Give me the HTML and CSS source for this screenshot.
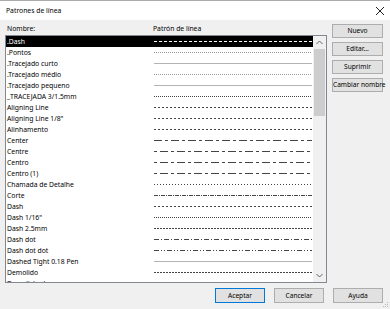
FILE: index.html
```html
<!DOCTYPE html>
<html lang="es">
<head>
  <meta charset="UTF-8">
  <title>Patrones de línea</title>
  <link rel="stylesheet" href="styles.css">
</head>
<body>
  <div class="dialog">
    <!-- Barra de título -->
    <div class="titlebar">
      <span class="title">Patrones de línea</span>
      <svg class="close" width="10" height="10" viewBox="0 0 10 10"><path d="M1 1 L9 9 M9 1 L1 9" stroke="#222" stroke-width="1"/></svg>
    </div>

    <div class="content">
      <div class="main">
        <div class="list-area">
          <div class="heads">
            <span class="col-name">Nombre:</span>
            <span>Patrón de línea</span>
          </div>
          <div class="listbox">
            <div class="rows">
              <div class="row sel"><span class="name">.Dash</span><span class="pat p-dash"></span></div>
              <div class="row"><span class="name">.Pontos</span><span class="pat p-fine"></span></div>
              <div class="row"><span class="name">.Tracejado curto</span><span class="pat p-solid"></span></div>
              <div class="row"><span class="name">.Tracejado médio</span><span class="pat p-fine"></span></div>
              <div class="row"><span class="name">.Tracejado pequeno</span><span class="pat p-solid"></span></div>
              <div class="row"><span class="name">_TRACEJADA 3/1.5mm</span><span class="pat p-fine dark"></span></div>
              <div class="row"><span class="name">Aligning Line</span><span class="pat p-dash"></span></div>
              <div class="row"><span class="name">Aligning Line 1/8"</span><span class="pat p-dash"></span></div>
              <div class="row"><span class="name">Alinhamento</span><span class="pat p-dash"></span></div>
              <div class="row"><span class="name">Center</span><span class="pat p-center"></span></div>
              <div class="row"><span class="name">Centre</span><span class="pat p-centre"></span></div>
              <div class="row"><span class="name">Centro</span><span class="pat p-centre"></span></div>
              <div class="row"><span class="name">Centro (1)</span><span class="pat p-centre"></span></div>
              <div class="row"><span class="name">Chamada de Detalhe</span><span class="pat p-dot"></span></div>
              <div class="row"><span class="name">Corte</span><span class="pat p-corte"></span></div>
              <div class="row"><span class="name">Dash</span><span class="pat p-dash"></span></div>
              <div class="row"><span class="name">Dash 1/16"</span><span class="pat p-fine dark"></span></div>
              <div class="row"><span class="name">Dash 2.5mm</span><span class="pat p-small"></span></div>
              <div class="row"><span class="name">Dash dot</span><span class="pat p-dashdot"></span></div>
              <div class="row"><span class="name">Dash dot dot</span><span class="pat p-dashdotdot"></span></div>
              <div class="row"><span class="name">Dashed Tight 0.18 Pen</span><span class="pat p-solid"></span></div>
              <div class="row"><span class="name">Demolido</span><span class="pat p-small"></span></div>
              <div class="row"><span class="name">Demolished</span><span class="pat p-dash"></span></div>
            </div>
            <div class="scrollbar">
              <svg class="arrow" width="7" height="5" viewBox="0 0 7 5"><path d="M0.5 4 L3.5 1 L6.5 4" fill="none" stroke="#606060" stroke-width="1"/></svg>
              <div class="track"><div class="thumb"></div></div>
              <svg class="arrow" width="7" height="5" viewBox="0 0 7 5"><path d="M0.5 1 L3.5 4 L6.5 1" fill="none" stroke="#606060" stroke-width="1"/></svg>
            </div>
          </div>
        </div>

        <div class="side-buttons">
          <button type="button">Nuevo</button>
          <button type="button">Editar...</button>
          <button type="button">Suprimir</button>
          <button type="button">Cambiar nombre</button>
        </div>
      </div>

      <div class="footer">
        <button type="button" class="default">Aceptar</button>
        <button type="button">Cancelar</button>
        <button type="button">Ayuda</button>
      </div>
    </div>

    <!-- Agarre de redimensionado -->
    <svg class="grip" width="6" height="6" viewBox="0 0 6 6">
      <rect x="4" y="0" width="1" height="1" fill="#b8b8b8"/>
      <rect x="2" y="2" width="1" height="1" fill="#b8b8b8"/>
      <rect x="4" y="2" width="1" height="1" fill="#b8b8b8"/>
      <rect x="0" y="4" width="1" height="1" fill="#b8b8b8"/>
      <rect x="2" y="4" width="1" height="1" fill="#b8b8b8"/>
      <rect x="4" y="4" width="1" height="1" fill="#b8b8b8"/>
    </svg>
  </div>
</body>
</html>
```

FILE: styles.css
```css
/* Ventana del diálogo */
body {
  margin: 0;
  font-family: "Noto Sans", "Liberation Sans", sans-serif;
  font-size: 6.8px;
  color: #000;
  background: #f0f0f0;
}

.dialog {
  width: 390px;
  height: 309px;
  box-sizing: border-box;
  border-top: 1px solid #aaaaaa;
  background: #f0f0f0;
  display: flex;
  flex-direction: column;
  position: relative;
}

/* Barra de título */
.titlebar {
  height: 19px;
  background: #ffffff;
  display: flex;
  align-items: center;
  justify-content: space-between;
  padding: 0 5px 0 6px;
}

.close {
  display: block;
}

.content {
  flex: 1;
  display: flex;
  flex-direction: column;
  padding: 2px 7px 0 5px;
}

.main {
  display: flex;
  gap: 5px;
}

.list-area {
  width: 322px;
}

.heads {
  height: 13px;
  display: flex;
  align-items: center;
  padding-left: 2px;
}

.col-name {
  width: 146px;
}

/* Lista */
.listbox {
  height: 248px;
  box-sizing: border-box;
  border: 1px solid #828790;
  background: #ffffff;
  display: flex;
  overflow: hidden;
}

.rows {
  flex: 1;
}

.row {
  height: 11px;
  display: flex;
  align-items: center;
  white-space: nowrap;
}

.row .name {
  width: 147px;
  padding-left: 1px;
}

.row.sel {
  background: #000000;
  color: #ffffff;
}

.pat {
  width: 158px;
  height: 1px;
}

/* Patrones de línea */
.p-solid { background: #b4b4b4; }
.p-fine { background: repeating-linear-gradient(90deg, #9a9a9a 0 1px, transparent 1px 2px); }
.p-fine.dark { background: repeating-linear-gradient(90deg, #444 0 1px, transparent 1px 2px); }
.p-dot { background: repeating-linear-gradient(90deg, #444 0 1px, transparent 1px 3px); }
.p-dash { background: repeating-linear-gradient(90deg, #444 0 2px, transparent 2px 4px); }
.p-small { background: repeating-linear-gradient(90deg, #444 0 2px, transparent 2px 3px); }
.p-center { background: repeating-linear-gradient(90deg, #444 0 8px, transparent 8px 11px, #444 11px 14px, transparent 14px 17px); }
.p-centre { background: repeating-linear-gradient(90deg, #444 0 3px, transparent 3px 6px, #444 6px 14px, transparent 14px 17px); }
.p-corte { background: repeating-linear-gradient(90deg, #444 0 4px, transparent 4px 5px, #444 5px 6px, transparent 6px 7px); }
.p-dashdot { background: repeating-linear-gradient(90deg, #444 0 5px, transparent 5px 7px, #444 7px 8px, transparent 8px 10px); }
.p-dashdotdot { background: repeating-linear-gradient(90deg, #444 0 5px, transparent 5px 7px, #444 7px 8px, transparent 8px 10px, #444 10px 11px, transparent 11px 13px); }

.row.sel .p-dash { background: repeating-linear-gradient(90deg, #fff 0 3px, transparent 3px 5px); }

/* Barra de desplazamiento */
.scrollbar {
  width: 13px;
  background: #f0f0f0;
  display: flex;
  flex-direction: column;
  align-items: center;
}

.arrow {
  display: block;
  margin: 4px 0;
}

.track {
  flex: 1;
  width: 100%;
  padding: 0 1px;
  box-sizing: border-box;
}

.thumb {
  height: 67px;
  background: #cdcdcd;
}

/* Botones */
button {
  font-family: inherit;
  font-size: 6.6px;
  color: #000;
  background: #e1e1e1;
  border: 1px solid #adadad;
  padding: 0;
  width: 51px;
  height: 14px;
  box-sizing: border-box;
  line-height: 12px;
  white-space: nowrap;
}

button.default {
  border-color: #0078d7;
}

.side-buttons {
  display: flex;
  flex-direction: column;
  gap: 4px;
  padding-top: 2px;
}

.footer {
  display: flex;
  justify-content: flex-end;
  gap: 9px;
  padding-top: 5px;
}

.footer button {
  width: 50px;
  height: 15px;
}

/* Agarre en la esquina inferior derecha */
.grip {
  position: absolute;
  right: 1px;
  bottom: 1px;
}
```
